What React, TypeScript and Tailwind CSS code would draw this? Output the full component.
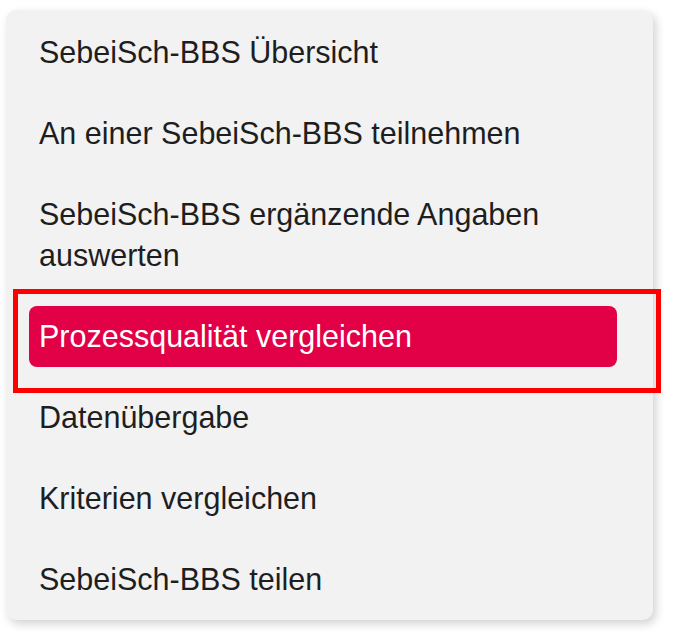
import React from "react";

const items = [
  "SebeiSch-BBS Übersicht",
  "An einer SebeiSch-BBS teilnehmen",
  "SebeiSch-BBS ergänzende Angaben auswerten",
  "Prozessqualität vergleichen",
  "Datenübergabe",
  "Kriterien vergleichen",
  "SebeiSch-BBS teilen",
];

export default function App() {
  return (
    <div
      className="relative w-[673px] h-[638px] bg-white overflow-hidden"
      style={{ fontFamily: '"Liberation Sans", Arial, sans-serif' }}
    >
      <div className="absolute left-[6px] top-[10px] w-[647px] h-[610px] rounded-[10px] bg-[#f2f2f2] shadow-[3px_4px_10px_rgba(0,0,0,0.18)]">
        <ul className="flex flex-col gap-[20px] pt-[12px] pl-[23px] pr-[36px]">
          {items.map((t, i) => {
            const active = i === 3;
            return (
              <li key={t}>
                <a
                  className={
                    "block rounded-[8px] px-[10px] py-[10px] text-[30.5px] leading-[41px] " +
                    (active ? "bg-[#e20046] text-white" : "text-[#1e1e1e]")
                  }
                >
                  {t}
                </a>
              </li>
            );
          })}
        </ul>
      </div>
      <div className="absolute left-[13px] top-[289px] w-[648px] h-[104px] border-[5px] border-[#ff0000]" />
    </div>
  );
}
